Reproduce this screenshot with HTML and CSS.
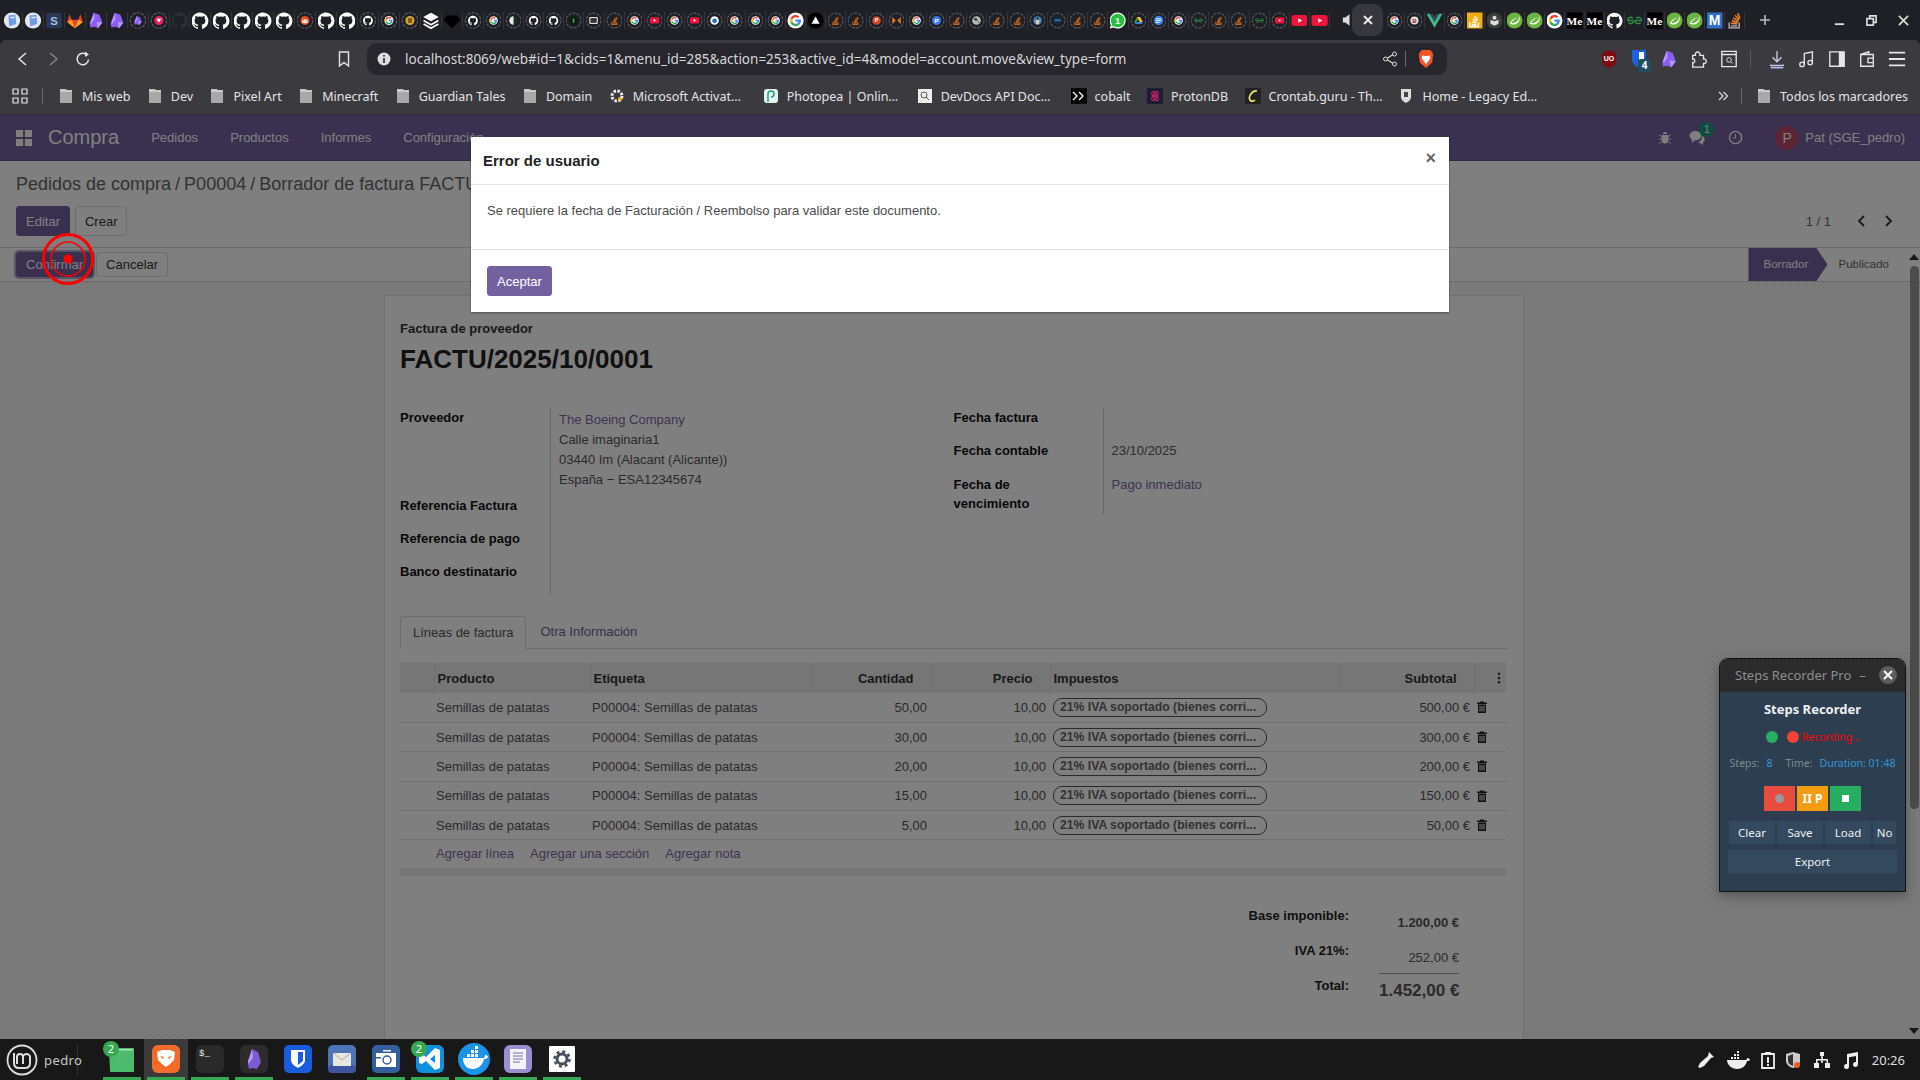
FILE: index.html
```html
<!DOCTYPE html>
<html lang="es">
<head>
    <meta charset="UTF-8">
    <title>Borrador de factura FACTU/2025/10/0001</title>
    <link rel="stylesheet" href="styles.css">
</head>
<body>
    <!-- iconos reutilizados -->
    <svg class="defs">
        <defs>
            <g id="ring"><circle cx="12" cy="12" r="11" fill="none" stroke="#5c5c62" stroke-width="1.6" stroke-dasharray="4.6 1.6"/></g>
            <g id="gh"><path fill="#fff" d="M12 .5C5.37.5 0 5.87 0 12.5c0 5.3 3.44 9.8 8.2 11.39.6.11.82-.26.82-.58v-2.03c-3.34.73-4.04-1.61-4.04-1.61-.55-1.39-1.34-1.76-1.34-1.76-1.09-.75.08-.73.08-.73 1.2.08 1.84 1.24 1.84 1.24 1.07 1.84 2.81 1.31 3.5 1 .11-.78.42-1.31.76-1.61-2.67-.3-5.47-1.33-5.47-5.93 0-1.31.47-2.38 1.24-3.22-.12-.3-.54-1.52.12-3.18 0 0 1.01-.32 3.3 1.23a11.5 11.5 0 0 1 6 0c2.29-1.55 3.3-1.23 3.3-1.23.66 1.66.24 2.88.12 3.18.77.84 1.24 1.91 1.24 3.22 0 4.61-2.81 5.63-5.48 5.92.43.37.81 1.1.81 2.22v3.29c0 .32.22.7.82.58C20.56 22.3 24 17.8 24 12.5 24 5.87 18.63.5 12 .5z"/></g>
            <g id="ghd"><path fill="#2a2f30" d="M12 .5C5.37.5 0 5.87 0 12.5c0 5.3 3.44 9.8 8.2 11.39v-3.2c-3.3.7-4-1.6-4-1.6-.6-1.4-1.3-1.8-1.3-1.8 1.2-.4 2.5 1.9 5.3 1.5.1-.8.4-1.3.8-1.6-2.7-.3-5.5-1.3-5.5-5.9 0-1.3.5-2.4 1.2-3.2-.1-.3-.5-1.5.1-3.2 0 0 1-.3 3.3 1.2a11.5 11.5 0 0 1 6 0c2.3-1.5 3.3-1.2 3.3-1.2.7 1.7.2 2.9.1 3.2.8.8 1.2 1.9 1.2 3.2 0 4.6-2.8 5.6-5.5 5.9.4.4.8 1.1.8 2.2v4.1C20.5 22.3 24 17.8 24 12.5 24 5.9 18.6.5 12 .5z"/></g>
            <g id="gl">
                <path fill="#4285F4" d="M22.56 12.25c0-.78-.07-1.53-.2-2.25H12v4.26h5.92c-.26 1.37-1.04 2.53-2.21 3.31v2.77h3.57c2.08-1.92 3.28-4.74 3.28-8.09z"/>
                <path fill="#34A853" d="M12 23c2.97 0 5.46-.98 7.28-2.66l-3.57-2.77c-.98.66-2.23 1.06-3.71 1.06-2.86 0-5.29-1.93-6.16-4.53H2.18v2.84C3.99 20.53 7.7 23 12 23z"/>
                <path fill="#FBBC05" d="M5.84 14.09c-.22-.66-.35-1.36-.35-2.09s.13-1.43.35-2.09V7.07H2.18C1.43 8.55 1 10.22 1 12s.43 3.45 1.18 4.93l3.66-2.84z"/>
                <path fill="#EA4335" d="M12 5.38c1.62 0 3.06.56 4.21 1.64l3.15-3.15C17.45 2.09 14.97 1 12 1 7.7 1 3.99 3.47 2.18 7.07l3.66 2.84c.87-2.6 3.3-4.53 6.16-4.53z"/>
            </g>
            <g id="gbig"><circle cx="12" cy="12" r="12" fill="#fff"/><use href="#gl" transform="translate(3 3) scale(.75)"/></g>
            <g id="rgl"><circle cx="12" cy="12" r="11" fill="#fff"/><use href="#gl" transform="translate(2 2) scale(.84)"/></g>
            <g id="doc"><circle cx="12" cy="12" r="11.5" fill="#e4e8ee"/><path fill="#6d9be6" d="M7 5l10-1 1 13-10 3z"/><path fill="#e4e8ee" d="M9.500 7l6-.6.2 2-6 .6z"/></g>
            <g id="sqs"><rect x="1" y="1" width="22" height="22" rx="3" fill="#2a3a56"/><text x="12" y="18" class="fav-t" fill="#a9c0e8" font-size="16">S</text></g>
            <g id="gitlab"><path fill="#e24329" d="M12 23L1 14l3-11 3.500 8h9L20 3l3 11z"/><path fill="#fca326" d="M12 23L1 14l6.500-3zM12 23l11-9-6.500-3z"/></g>
            <g id="obs"><path fill="#8b5cf6" d="M9 1l8 3 4 11-6 8-5-2-6 1-1-6z"/><path fill="#b79bf7" d="M9 1l1 9-5 7-1-2zM15 23l-2-9 8 1z"/></g>
            <g id="heart"><circle cx="12" cy="12" r="11" fill="#e8265e"/><path fill="#fff" d="M6 8h12l-6 9z"/></g>
            <g id="reddit"><circle cx="12" cy="12" r="11" fill="#e9491d"/><ellipse cx="12" cy="14" rx="7" ry="5" fill="#fff"/><circle cx="9" cy="13" r="1.500" fill="#e9491d"/><circle cx="15" cy="13" r="1.500" fill="#e9491d"/></g>
            <g id="yel"><circle cx="12" cy="12" r="11" fill="#d9a62e"/><rect x="7" y="6" width="10" height="12" fill="#7c5c1c"/></g>
            <g id="layers"><path fill="#fff" d="M12 1l11 6-11 6L1 7z"/><path fill="none" stroke="#fff" stroke-width="2.400" d="M1.500 12l10.500 6 10.500-6M1.500 17l10.500 6 10.500-6"/></g>
            <g id="diamond"><path fill="#000" d="M5 5h14l5 6-12 12L0 11z"/></g>
            <g id="half"><circle cx="12" cy="12" r="11" fill="#1d2a2a"/><path fill="#e8e8e8" d="M12 1a11 11 0 0 0 0 22z"/></g>
            <g id="green"><circle cx="12" cy="12" r="11" fill="#0d1a10"/><rect x="10" y="7" width="4" height="11" fill="#4caf50"/></g>
            <g id="rect"><rect x="1" y="3" width="22" height="18" rx="3" fill="#ddd"/><rect x="4" y="6" width="16" height="12" fill="#333"/></g>
            <g id="so"><path fill="none" stroke="#c8641c" stroke-width="3" d="M5 15v7h13v-7M8 18h7M8 14l7 1.200M9.500 10l6 3M12 6l5 5M16 3l3 6"/></g>
            <g id="yt"><rect x="0" y="4" width="24" height="16" rx="4" fill="#f0133a"/><path fill="#fff" d="M10 8.500l6 3.500-6 3.500z"/></g>
            <g id="bluew"><circle cx="12" cy="12" r="11" fill="#fff"/><circle cx="12" cy="13" r="6" fill="#1f7ab8"/></g>
            <g id="tri"><circle cx="12" cy="12" r="12" fill="#000"/><path fill="#fff" d="M12 6l6 11H6z"/></g>
            <g id="ppt"><circle cx="12" cy="12" r="11" fill="#d24726"/><text x="12" y="17" class="fav-t" fill="#fff" font-size="14">P</text></g>
            <g id="xor"><path fill="#e07b1a" d="M1 3l9 9-9 9zM23 3l-9 9 9 9z"/></g>
            <g id="pblue"><circle cx="12" cy="12" r="11.500" fill="#3b78f0"/><text x="12" y="18" class="fav-t" fill="#fff" font-size="16">P</text></g>
            <g id="earth"><circle cx="12" cy="12" r="11" fill="#bbb"/><path fill="#444" d="M5 5l8 1 2 5-4 3-5-3zM15 15l4-1-2 6z"/></g>
            <g id="photo"><circle cx="12" cy="12" r="11" fill="#3b87c4"/><ellipse cx="12" cy="15" rx="5" ry="7" fill="#d6cbb0"/><circle cx="12" cy="7" r="3" fill="#333"/></g>
            <g id="darkb"><circle cx="12" cy="12" r="11" fill="#16283f"/><rect x="4" y="9" width="16" height="5" fill="#2d76a8"/></g>
            <g id="wa"><path fill="#fff" d="M12 0a12 12 0 0 0-10 18.500L.5 24l5.700-1.500A12 12 0 1 0 12 0z"/><path fill="#25c03f" d="M12 2a10 10 0 0 0-8.300 15.600l-.9 3.500 3.600-1A10 10 0 1 0 12 2z"/><text x="12" y="17" class="fav-t" fill="#fff" font-size="14">1</text></g>
            <g id="drive"><path fill="#2a9d4e" d="M8 3L1 16l3 5 7-12z"/><path fill="#f7c12d" d="M8 3h8l7 13h-8z"/><path fill="#3f7fe8" d="M4 21h16l3-5H8z"/></g>
            <g id="docs"><circle cx="12" cy="12" r="12" fill="#3c83f0"/><path stroke="#fff" stroke-width="2.400" d="M5 8h14M5 12.500h14M5 17h9"/></g>
            <g id="gfg"><path fill="none" stroke="#2f8d46" stroke-width="2.200" d="M11 12H1.500a4.500 4.500 0 0 1 8-3M11 12a4.500 4.500 0 0 1-8 3M13 12h9.500a4.500 4.500 0 0 0-8-3M13 12a4.500 4.500 0 0 0 8 3"/></g>
            <g id="bb"><circle cx="12" cy="12" r="10.500" fill="#e6dcdc"/><text x="12" y="18" class="fav-t" fill="#8a1f2b" font-size="16">B</text></g>
            <g id="vue"><path fill="#41b883" d="M0 2h5l7 12 7-12h5L12 23z"/><path fill="#35495e" d="M5 2h4l3 5 3-5h4l-7 12z"/></g>
            <g id="soy"><rect width="24" height="24" fill="#f2ac14"/><path fill="none" stroke="#fff" stroke-width="2" d="M5 15v6h13v-6M8 18h7M8 14l7 1.200M9.500 10l6 3M12 6l5 5"/></g>
            <g id="cdark"><circle cx="12" cy="12" r="12" fill="#3d3d3d"/><path fill="#ddd" d="M6 11l6 2 6-2v6l-6 3-6-3z"/><circle cx="12" cy="8" r="3" fill="#ddd"/></g>
            <g id="spring"><circle cx="12" cy="12" r="12" fill="#6db33f"/><path fill="#fff" d="M20 4c1 8-3 14-11 14-2 0-4-1-4-1 2-6 8-9 12-9-4 1-8 4-10 8 7 0 12-4 13-12z"/></g>
            <g id="me"><rect width="24" height="24" fill="#000"/><text x="0" y="18" class="fav-m" fill="#fff" font-size="17">Me</text></g>
            <g id="mblue"><rect width="24" height="24" fill="#2f6fc9"/><text x="12" y="19" class="fav-t" fill="#fff" font-size="21">M</text></g>
            <g id="sobig"><path fill="none" stroke="#bcbbbb" stroke-width="2" d="M4 15v8h15v-8M7 20h9"/><path fill="none" stroke="#f48024" stroke-width="2.400" d="M7 16l9 1M8 12l9 3M10 8l8 5M13 4l6 7M17 1l3 8"/></g>
            <g id="trash"><path fill="#222" d="M8 1h8v2h6v3H2V3h6zM4 7h16v17H4zm3 3v11h2V10zm4 0v11h2V10zm4 0v11h2V10z"/></g>
            <g id="folder"><path fill="#a8a8a8" d="M2 1h5l2 1h5v13H2z"/><path fill="#c9c9c9" d="M2 1h5l2 1h5v2H2z"/></g>
        </defs>
    </svg>

    <div class="tabstrip">
        <div class="tabgroup tg-a">
            <svg class="fav" viewBox="0 0 24 24"><use href="#doc"/></svg>
            <svg class="fav" viewBox="0 0 24 24"><use href="#doc"/></svg>
            <svg class="fav" viewBox="0 0 24 24"><use href="#sqs"/></svg>
            <svg class="fav" viewBox="0 0 24 24"><use href="#gitlab"/></svg>
            <svg class="fav" viewBox="0 0 24 24"><use href="#obs"/></svg>
            <svg class="fav" viewBox="0 0 24 24"><use href="#obs"/></svg>
            <svg class="fav" viewBox="0 0 24 24"><use href="#ring"/><use class="in" href="#obs"/></svg>
            <svg class="fav" viewBox="0 0 24 24"><use href="#ring"/><use class="in" href="#heart"/></svg>
            <svg class="fav" viewBox="0 0 24 24"><use href="#ghd"/></svg>
            <svg class="fav" viewBox="0 0 24 24"><use href="#gh"/></svg>
            <svg class="fav" viewBox="0 0 24 24"><use href="#gh"/></svg>
            <svg class="fav" viewBox="0 0 24 24"><use href="#gh"/></svg>
            <svg class="fav" viewBox="0 0 24 24"><use href="#gh"/></svg>
            <svg class="fav" viewBox="0 0 24 24"><use href="#gh"/></svg>
            <svg class="fav" viewBox="0 0 24 24"><use href="#ring"/><use class="in" href="#reddit"/></svg>
            <svg class="fav" viewBox="0 0 24 24"><use href="#gh"/></svg>
            <svg class="fav" viewBox="0 0 24 24"><use href="#gh"/></svg>
            <svg class="fav" viewBox="0 0 24 24"><use href="#ring"/><use class="in" href="#gh"/></svg>
            <svg class="fav" viewBox="0 0 24 24"><use href="#ring"/><use class="in" href="#rgl"/></svg>
            <svg class="fav" viewBox="0 0 24 24"><use href="#ring"/><use class="in" href="#yel"/></svg>
            <svg class="fav" viewBox="0 0 24 24"><use href="#layers"/></svg>
            <svg class="fav" viewBox="0 0 24 24"><use href="#diamond"/></svg>
            <svg class="fav" viewBox="0 0 24 24"><use href="#ring"/><use class="in" href="#gh"/></svg>
        </div>
        <div class="tabgroup tg-b">
            <svg class="fav" viewBox="0 0 24 24"><use href="#ring"/><use class="in" href="#rgl"/></svg>
            <svg class="fav" viewBox="0 0 24 24"><use href="#ring"/><use class="in" href="#half"/></svg>
            <svg class="fav" viewBox="0 0 24 24"><use href="#ring"/><use class="in" href="#gh"/></svg>
            <svg class="fav" viewBox="0 0 24 24"><use href="#ring"/><use class="in" href="#gh"/></svg>
            <svg class="fav" viewBox="0 0 24 24"><use href="#ring"/><use class="in" href="#green"/></svg>
            <svg class="fav" viewBox="0 0 24 24"><use href="#ring"/><use class="in" href="#rect"/></svg>
            <svg class="fav" viewBox="0 0 24 24"><use href="#ring"/><use class="in" href="#so"/></svg>
            <svg class="fav" viewBox="0 0 24 24"><use href="#ring"/><use class="in" href="#rgl"/></svg>
            <svg class="fav" viewBox="0 0 24 24"><use href="#ring"/><use class="in" href="#yt"/></svg>
            <svg class="fav" viewBox="0 0 24 24"><use href="#ring"/><use class="in" href="#rgl"/></svg>
            <svg class="fav" viewBox="0 0 24 24"><use href="#ring"/><use class="in" href="#yt"/></svg>
            <svg class="fav" viewBox="0 0 24 24"><use href="#ring"/><use class="in" href="#bluew"/></svg>
            <svg class="fav" viewBox="0 0 24 24"><use href="#ring"/><use class="in" href="#rgl"/></svg>
            <svg class="fav" viewBox="0 0 24 24"><use href="#ring"/><use class="in" href="#rgl"/></svg>
            <svg class="fav" viewBox="0 0 24 24"><use href="#ring"/><use class="in" href="#rgl"/></svg>
            <svg class="fav" viewBox="0 0 24 24"><use href="#gbig"/></svg>
            <svg class="fav" viewBox="0 0 24 24"><use href="#tri"/></svg>
            <svg class="fav" viewBox="0 0 24 24"><use href="#ring"/><use class="in" href="#so"/></svg>
            <svg class="fav" viewBox="0 0 24 24"><use href="#ring"/><use class="in" href="#so"/></svg>
            <svg class="fav" viewBox="0 0 24 24"><use href="#ring"/><use class="in" href="#ppt"/></svg>
            <svg class="fav" viewBox="0 0 24 24"><use href="#ring"/><use class="in" href="#xor"/></svg>
            <svg class="fav" viewBox="0 0 24 24"><use href="#ring"/><use class="in" href="#rgl"/></svg>
            <svg class="fav" viewBox="0 0 24 24"><use href="#ring"/><use class="in" href="#pblue"/></svg>
            <svg class="fav" viewBox="0 0 24 24"><use href="#ring"/><use class="in" href="#so"/></svg>
            <svg class="fav" viewBox="0 0 24 24"><use href="#ring"/><use class="in" href="#earth"/></svg>
            <svg class="fav" viewBox="0 0 24 24"><use href="#ring"/><use class="in" href="#so"/></svg>
            <svg class="fav" viewBox="0 0 24 24"><use href="#ring"/><use class="in" href="#so"/></svg>
            <svg class="fav" viewBox="0 0 24 24"><use href="#ring"/><use class="in" href="#photo"/></svg>
            <svg class="fav" viewBox="0 0 24 24"><use href="#ring"/><use class="in" href="#darkb"/></svg>
            <svg class="fav" viewBox="0 0 24 24"><use href="#ring"/><use class="in" href="#so"/></svg>
            <svg class="fav" viewBox="0 0 24 24"><use href="#ring"/><use class="in" href="#so"/></svg>
            <svg class="fav" viewBox="0 0 24 24"><use href="#wa"/></svg>
            <svg class="fav" viewBox="0 0 24 24"><use href="#ring"/><use class="in" href="#drive"/></svg>
            <svg class="fav" viewBox="0 0 24 24"><use href="#ring"/><use class="in" href="#docs"/></svg>
            <svg class="fav" viewBox="0 0 24 24"><use href="#ring"/><use class="in" href="#rgl"/></svg>
            <svg class="fav" viewBox="0 0 24 24"><use href="#ring"/><use class="in" href="#gfg"/></svg>
            <svg class="fav" viewBox="0 0 24 24"><use href="#ring"/><use class="in" href="#so"/></svg>
            <svg class="fav" viewBox="0 0 24 24"><use href="#ring"/><use class="in" href="#so"/></svg>
            <svg class="fav" viewBox="0 0 24 24"><use href="#ring"/><use class="in" href="#gfg"/></svg>
            <svg class="fav" viewBox="0 0 24 24"><use href="#ring"/><use class="in" href="#yt"/></svg>
            <svg class="fav" viewBox="0 0 24 24"><use href="#yt"/></svg>
            <svg class="fav" viewBox="0 0 24 24"><use href="#yt"/></svg>
        </div>
        <div class="active-tab">
            <svg class="tab-vol" viewBox="0 0 12 16"><path fill="#ddd" d="M1 5h3l5-4v14l-5-4H1z"/></svg>
            <div class="tab-current"><svg viewBox="0 0 10 10" width="10" height="10"><path stroke="#eee" stroke-width="1.800" d="M1 1l8 8M9 1l-8 8"/></svg></div>
        </div>
        <div class="tabgroup tg-c">
            <svg class="fav" viewBox="0 0 24 24"><use href="#ring"/><use class="in" href="#rgl"/></svg>
            <svg class="fav" viewBox="0 0 24 24"><use href="#ring"/><use class="in" href="#bb"/></svg>
            <svg class="fav" viewBox="0 0 24 24"><use href="#vue"/></svg>
            <svg class="fav" viewBox="0 0 24 24"><use href="#ring"/><use class="in" href="#rgl"/></svg>
            <svg class="fav" viewBox="0 0 24 24"><use href="#soy"/></svg>
            <svg class="fav" viewBox="0 0 24 24"><use href="#cdark"/></svg>
            <svg class="fav" viewBox="0 0 24 24"><use href="#spring"/></svg>
            <svg class="fav" viewBox="0 0 24 24"><use href="#spring"/></svg>
            <svg class="fav" viewBox="0 0 24 24"><use href="#gbig"/></svg>
            <svg class="fav" viewBox="0 0 24 24"><use href="#me"/></svg>
            <svg class="fav" viewBox="0 0 24 24"><use href="#me"/></svg>
            <svg class="fav" viewBox="0 0 24 24"><use href="#gh"/></svg>
            <svg class="fav" viewBox="0 0 24 24"><use href="#gfg"/></svg>
            <svg class="fav" viewBox="0 0 24 24"><use href="#me"/></svg>
            <svg class="fav" viewBox="0 0 24 24"><use href="#spring"/></svg>
            <svg class="fav" viewBox="0 0 24 24"><use href="#spring"/></svg>
            <svg class="fav" viewBox="0 0 24 24"><use href="#mblue"/></svg>
            <svg class="fav" viewBox="0 0 24 24"><use href="#sobig"/></svg>
        </div>
        <svg class="new-tab" viewBox="0 0 12 12"><path stroke="#bbb" stroke-width="1.600" d="M6 1v10M1 6h10"/></svg>
        <div class="win-ctrl">
            <svg viewBox="0 0 12 12"><path stroke="#ddd" stroke-width="2" d="M1 10h10"/></svg>
            <svg viewBox="0 0 12 12"><path fill="none" stroke="#ddd" stroke-width="1.800" d="M1 4h7v7H1zM4 4V1h7v7H8"/></svg>
            <svg viewBox="0 0 12 12"><path stroke="#ddd" stroke-width="1.800" d="M1 1l10 10M11 1L1 11"/></svg>
        </div>
    </div>

    <div class="toolbar">
        <div class="nav-btns">
            <svg viewBox="0 0 16 16"><path fill="none" stroke="#e6e6e6" stroke-width="1.500" d="M11 2L4 8l7 6"/></svg>
            <svg viewBox="0 0 16 16"><path fill="none" stroke="#85858a" stroke-width="1.500" d="M5 2l7 6-7 6"/></svg>
            <svg viewBox="0 0 16 16"><path fill="none" stroke="#e6e6e6" stroke-width="1.500" d="M13.500 8.500A5.700 5.700 0 1 1 11 3.300"/><path fill="#e6e6e6" d="M10 .5l4 3-4 2.500z"/></svg>
        </div>
        <svg class="bookmark-ic" viewBox="0 0 12 16"><path fill="none" stroke="#e6e6e6" stroke-width="1.400" d="M1.500 1h9v14L6 11.500 1.500 15z"/></svg>
        <div class="omnibox">
            <svg class="info-ic" viewBox="0 0 14 14"><circle cx="7" cy="7" r="6.500" fill="#ddd"/><path stroke="#26262c" stroke-width="1.600" d="M7 6v5M7 3v1.600"/></svg>
            <span class="url">localhost:8069/web#id=1&amp;cids=1&amp;menu_id=285&amp;action=253&amp;active_id=4&amp;model=account.move&amp;view_type=form</span>
            <svg class="share-ic" viewBox="0 0 16 16"><path fill="none" stroke="#ddd" stroke-width="1.100" d="M4 8l8-5M4 8l8 5"/><circle cx="3.500" cy="8" r="2" fill="#26262c" stroke="#ddd"/><circle cx="12.500" cy="3" r="2" fill="#26262c" stroke="#ddd"/><circle cx="12.500" cy="13" r="2" fill="#26262c" stroke="#ddd"/></svg>
            <span class="omni-sep"></span>
            <svg class="brave-ic" viewBox="0 0 18 20"><path fill="#f1562b" d="M4 0h10l3 4-1 10-7 6-7-6L1 4z"/><path fill="#fff" d="M5 6l4 1 4-1 1 3-3 4-2 3-2-3-3-4z"/></svg>
        </div>
        <div class="ext-icons">
            <svg viewBox="0 0 18 20"><path fill="#7d0d12" d="M9 1l7 3v8c0 4-4 6-7 7-3-1-7-3-7-7V4z"/><text x="9" y="12" class="fav-t" font-size="7" fill="#fff">UO</text></svg>
            <span class="ext-bw">
                <svg viewBox="0 0 18 20"><path fill="#1d63d8" d="M2 1h14v10c0 4-4 6-7 8-3-2-7-4-7-8z"/><path fill="#fff" d="M9 3h5v8c0 2-3 3-5 5z"/></svg>
                <b class="ext-badge">4</b>
            </span>
            <svg viewBox="0 0 24 24"><use href="#obs"/></svg>
            <svg viewBox="0 0 20 20"><path fill="none" stroke="#e6e6e6" stroke-width="1.500" d="M3 6h3c-1-5 6-5 5 0h4v4c4-1 4 6 0 5v4H3v-5c3 1 3-5 0-4z"/></svg>
            <svg viewBox="0 0 20 20"><path fill="none" stroke="#e6e6e6" stroke-width="1.500" d="M2 1.500h16v17H2zM2 5h16"/><circle cx="10" cy="11" r="2.600" fill="none" stroke="#e6e6e6"/><path stroke="#e6e6e6" d="M12 13l2 2"/></svg>
            <span class="ext-sep"></span>
            <svg viewBox="0 0 20 20"><path fill="none" stroke="#c9c9e8" stroke-width="1.500" d="M10 1v11M5 8l5 5 5-5M3 16v1h14v-1"/><path stroke="#b9b6f0" stroke-width="2" d="M3 19.500h14"/></svg>
            <svg viewBox="0 0 20 20"><path fill="none" stroke="#e6e6e6" stroke-width="1.500" d="M7 16V4l9-2v12"/><circle cx="4.500" cy="16" r="2.500" fill="none" stroke="#e6e6e6" stroke-width="1.500"/><circle cx="13.500" cy="14" r="2.500" fill="none" stroke="#e6e6e6" stroke-width="1.500"/></svg>
            <svg viewBox="0 0 20 20"><path fill="none" stroke="#e6e6e6" stroke-width="1.500" d="M2 2h16v16H2z"/><path fill="#e6e6e6" d="M12 2h6v16h-6z"/></svg>
            <svg viewBox="0 0 20 20"><path fill="none" stroke="#e6e6e6" stroke-width="1.500" d="M3 5h14v13H3zM3 5l9-3v3M11 9h6v5h-6z"/></svg>
            <svg viewBox="0 0 20 20"><path stroke="#e6e6e6" stroke-width="2" d="M1 3h18M1 10h18M1 17h18"/></svg>
        </div>
    </div>

    <div class="bookmarks">
        <svg class="apps-ic" viewBox="0 0 16 16"><path fill="none" stroke="#e6e6e6" stroke-width="1.200" d="M1 1h5v5H1zM10 1h5v5h-5zM1 10h5v5H1zM10 10h5v5h-5z"/></svg>
        <span class="bm-sep"></span>
        <div class="bm-list">
            <a class="bm"><svg viewBox="0 0 16 16"><use href="#folder"/></svg>Mis web</a>
            <a class="bm"><svg viewBox="0 0 16 16"><use href="#folder"/></svg>Dev</a>
            <a class="bm"><svg viewBox="0 0 16 16"><use href="#folder"/></svg>Pixel Art</a>
            <a class="bm"><svg viewBox="0 0 16 16"><use href="#folder"/></svg>Minecraft</a>
            <a class="bm"><svg viewBox="0 0 16 16"><use href="#folder"/></svg>Guardian Tales</a>
            <a class="bm"><svg viewBox="0 0 16 16"><use href="#folder"/></svg>Domain</a>
            <a class="bm long"><svg viewBox="0 0 16 16"><circle cx="8" cy="8" r="5" fill="none" stroke="#eee" stroke-width="3" stroke-dasharray="2.500 1.400"/><circle cx="11" cy="11" r="2" fill="#f0b429"/></svg>Microsoft Activat…</a>
            <a class="bm long"><svg viewBox="0 0 16 16"><rect x="1" y="1" width="14" height="14" rx="3" fill="#e6f2ee"/><path fill="none" stroke="#1c9c8a" stroke-width="1.500" d="M5 14V6a3 3 0 1 1 3 3"/></svg>Photopea | Onlin…</a>
            <a class="bm long"><svg viewBox="0 0 16 16"><rect x="1" y="1" width="14" height="14" fill="#eee"/><circle cx="7" cy="7" r="3" fill="none" stroke="#555"/><path stroke="#555" d="M9 9l3 3"/></svg>DevDocs API Doc…</a>
            <a class="bm"><svg viewBox="0 0 16 16"><rect width="16" height="16" fill="#000"/><path fill="none" stroke="#fff" stroke-width="1.300" d="M2 4l4 4-4 4M8 4l4 4-4 4"/></svg>cobalt</a>
            <a class="bm"><svg viewBox="0 0 16 16"><rect width="16" height="16" fill="#1c1c34"/><ellipse cx="8" cy="8" rx="5" ry="2.200" fill="none" stroke="#e0246a" transform="rotate(60 8 8)"/><ellipse cx="8" cy="8" rx="5" ry="2.200" fill="none" stroke="#e0246a" transform="rotate(-60 8 8)"/><circle cx="8" cy="8" r="1.300" fill="#e0246a"/></svg>ProtonDB</a>
            <a class="bm long"><svg viewBox="0 0 16 16"><rect width="16" height="16" fill="#222"/><path fill="none" stroke="#e9e65e" stroke-width="1.700" d="M12 3C7 2 3 9 5 12c1 2 4 1 5 0"/></svg>Crontab.guru - Th…</a>
            <a class="bm long"><svg viewBox="0 0 16 16"><path fill="#ddd" d="M3 1h10v8c0 3-3 5-5 6-2-1-5-3-5-6z"/><path fill="#444" d="M6 4h4v5H6z"/></svg>Home - Legacy Ed…</a>
        </div>
        <div class="bm-right">
            <svg class="bm-more" viewBox="0 0 12 12"><path fill="none" stroke="#ddd" stroke-width="1.200" d="M2 2l4 4-4 4M6.500 2l4 4-4 4"/></svg>
            <span class="bm-sep"></span>
            <a class="bm"><svg viewBox="0 0 16 16"><use href="#folder"/></svg>Todos los marcadores</a>
        </div>
    </div>

    <div class="odoo">
        <header class="o-nav">
            <svg class="o-apps" viewBox="0 0 18 18"><path fill="#fff" d="M0 0h8v8H0zM10 0h8v8h-8zM0 10h8v8H0zM10 10h8v8h-8z"/></svg>
            <span class="o-brand">Compra</span>
            <nav class="o-menu">
                <a>Pedidos</a>
                <a>Productos</a>
                <a>Informes</a>
                <a>Configuración</a>
            </nav>
            <div class="o-systray">
                <svg class="bug-ic" viewBox="0 0 14 16"><path fill="#fff" d="M4.500 4a2.500 2.500 0 0 1 5 0zM3 5h8v6a4 4 0 0 1-8 0z"/><path stroke="#fff" d="M3 7L0 5M11 7l3-2M3 10H0M11 10h3M3 13l-3 2M11 13l3 2"/></svg>
                <span class="chat-ic">
                    <svg viewBox="0 0 18 16"><path fill="#fff" d="M7 1a6 5 0 0 1 6 5 6 5 0 0 1-7 5l-3 3v-4A6 5 0 0 1 7 1z"/><path fill="#fff" d="M14 6a4 4 0 0 1 1 7v3l-3-2-3-1c3 0 5-4 5-7z"/></svg>
                    <b class="chat-badge">1</b>
                </span>
                <svg class="clock-ic" viewBox="0 0 16 16"><circle cx="8" cy="8" r="6.500" fill="none" stroke="#fff" stroke-width="1.500"/><path fill="none" stroke="#fff" d="M8 4v4.500H5"/></svg>
                <span class="avatar">P</span>
                <span class="o-user">Pat (SGE_pedro)</span>
            </div>
        </header>

        <section class="cp">
            <div class="crumbs">
                <span>Pedidos de compra</span><span class="crumb-sep">/</span><span>P00004</span><span class="crumb-sep">/</span><span>Borrador de factura FACTU/2025/10/0001</span>
            </div>
            <div class="cp-row">
                <button class="btn primary">Editar</button>
                <button class="btn">Crear</button>
                <div class="pager">
                    <span>1 / 1</span>
                    <svg viewBox="0 0 8 12"><path fill="none" stroke="#333" stroke-width="1.800" d="M6.500 1L1.500 6l5 5"/></svg>
                    <svg viewBox="0 0 8 12"><path fill="none" stroke="#333" stroke-width="1.800" d="M1.500 1l5 5-5 5"/></svg>
                </div>
            </div>
            <div class="cp-row cp-status">
                <button class="btn primary focus">Confirmar</button>
                <button class="btn">Cancelar</button>
                <div class="statusbar">
                    <span class="st st-on">Borrador</span>
                    <span class="st">Publicado</span>
                </div>
            </div>
        </section>

        <main class="content">
            <div class="sheet">
                <div class="sheet-kind">Factura de proveedor</div>
                <h1 class="sheet-title">FACTU/2025/10/0001</h1>

                <div class="groups">
                    <div class="fgroup">
                        <div class="f-label first">Proveedor</div>
                        <div class="f-value addr">
                            <a class="link">The Boeing Company</a>
                            <div>Calle imaginaria1</div>
                            <div>03440 Im (Alacant (Alicante))</div>
                            <div>España − ESA12345674</div>
                        </div>
                        <div class="f-label row33">Referencia Factura</div>
                        <div class="f-value"></div>
                        <div class="f-label row33">Referencia de pago</div>
                        <div class="f-value"></div>
                        <div class="f-label row33 last">Banco destinatario</div>
                        <div class="f-value"></div>
                    </div>
                    <div class="fgroup right">
                        <div class="f-label first h33">Fecha factura</div>
                        <div class="f-value"></div>
                        <div class="f-label first h33">Fecha contable</div>
                        <div class="f-value plain">23/10/2025</div>
                        <div class="f-label first tall">Fecha de vencimiento</div>
                        <div class="f-value plain"><a class="link">Pago inmediato</a></div>
                    </div>
                </div>

                <div class="nb-tabs">
                    <a class="nb-tab on">Líneas de factura</a>
                    <a class="nb-tab">Otra Información</a>
                </div>

                <table class="lines">
                    <colgroup>
                        <col class="c-h"><col class="c-p"><col class="c-e"><col class="c-n"><col class="c-n"><col class="c-t"><col class="c-s"><col class="c-x">
                    </colgroup>
                    <thead>
                        <tr>
                            <th></th><th>Producto</th><th>Etiqueta</th><th class="num">Cantidad</th><th class="num">Precio</th><th>Impuestos</th><th class="num">Subtotal</th>
                            <th class="kebab"><svg viewBox="0 0 4 14"><circle cx="2" cy="2" r="1.500"/><circle cx="2" cy="7" r="1.500"/><circle cx="2" cy="12" r="1.500"/></svg></th>
                        </tr>
                    </thead>
                    <tbody>
                        <tr>
                            <td></td><td>Semillas de patatas</td><td>P00004: Semillas de patatas</td><td class="num">50,00</td><td class="num">10,00</td>
                            <td><span class="tag">21% IVA soportado (bienes corri...</span></td><td class="num">500,00 €</td>
                            <td class="del"><svg viewBox="0 0 24 24"><use href="#trash"/></svg></td>
                        </tr>
                        <tr>
                            <td></td><td>Semillas de patatas</td><td>P00004: Semillas de patatas</td><td class="num">30,00</td><td class="num">10,00</td>
                            <td><span class="tag">21% IVA soportado (bienes corri...</span></td><td class="num">300,00 €</td>
                            <td class="del"><svg viewBox="0 0 24 24"><use href="#trash"/></svg></td>
                        </tr>
                        <tr>
                            <td></td><td>Semillas de patatas</td><td>P00004: Semillas de patatas</td><td class="num">20,00</td><td class="num">10,00</td>
                            <td><span class="tag">21% IVA soportado (bienes corri...</span></td><td class="num">200,00 €</td>
                            <td class="del"><svg viewBox="0 0 24 24"><use href="#trash"/></svg></td>
                        </tr>
                        <tr>
                            <td></td><td>Semillas de patatas</td><td>P00004: Semillas de patatas</td><td class="num">15,00</td><td class="num">10,00</td>
                            <td><span class="tag">21% IVA soportado (bienes corri...</span></td><td class="num">150,00 €</td>
                            <td class="del"><svg viewBox="0 0 24 24"><use href="#trash"/></svg></td>
                        </tr>
                        <tr>
                            <td></td><td>Semillas de patatas</td><td>P00004: Semillas de patatas</td><td class="num">5,00</td><td class="num">10,00</td>
                            <td><span class="tag">21% IVA soportado (bienes corri...</span></td><td class="num">50,00 €</td>
                            <td class="del"><svg viewBox="0 0 24 24"><use href="#trash"/></svg></td>
                        </tr>
                    </tbody>
                </table>
                <div class="add-row">
                    <a class="link">Agregar línea</a>
                    <a class="link">Agregar una sección</a>
                    <a class="link">Agregar nota</a>
                </div>
                <div class="lines-foot"></div>

                <div class="totals">
                    <span class="t-label">Base imponible:</span><span class="t-val strong">1.200,00 €</span>
                    <span class="t-label">IVA 21%:</span><span class="t-val">252,00 €</span>
                    <span class="t-label">Total:</span><span class="t-val grand">1.452,00 €</span>
                </div>
            </div>
        </main>

        <div class="scrollbar">
            <span class="sb-up"></span>
            <span class="sb-thumb"></span>
            <span class="sb-down"></span>
        </div>

        <div class="backdrop"></div>

        <div class="dialog">
            <div class="dlg-head">
                <h4>Error de usuario</h4>
                <span class="dlg-close">×</span>
            </div>
            <div class="dlg-body">Se requiere la fecha de Facturación / Reembolso para validar este documento.</div>
            <div class="dlg-foot"><button class="btn primary">Aceptar</button></div>
        </div>

        <svg class="click-mark" viewBox="0 0 60 60">
            <circle cx="30" cy="30" r="24.500" fill="none" stroke="#f00" stroke-width="3"/>
            <circle cx="30" cy="30" r="17" fill="none" stroke="#f00" stroke-width="1.500"/>
            <circle cx="30" cy="30" r="4.500" fill="#f00"/>
        </svg>

        <aside class="recorder">
            <div class="rec-head">
                <span class="rec-title">Steps Recorder Pro</span>
                <span class="rec-min">–</span>
                <span class="rec-close"><svg viewBox="0 0 10 10" width="10" height="10"><path stroke="#fff" stroke-width="2" d="M1 1l8 8M9 1l-8 8"/></svg></span>
            </div>
            <div class="rec-body">
                <div class="rec-name">Steps Recorder</div>
                <div class="rec-state">
                    <span class="dot green"></span>
                    <span class="dot red"></span>
                    <span class="rec-label">Recording...</span>
                </div>
                <div class="rec-stats">
                    <span>Steps:</span><b class="s-num">8</b>
                    <span>Time:</span><b>Duration: 01:48</b>
                </div>
                <div class="rec-main">
                    <button class="r-btn r-red"><i class="rec-dot"></i></button>
                    <button class="r-btn r-orange">II&nbsp;P</button>
                    <button class="r-btn r-green"><i class="rec-sq"></i></button>
                </div>
                <div class="rec-small">
                    <button class="s-btn">Clear</button>
                    <button class="s-btn">Save</button>
                    <button class="s-btn">Load</button>
                    <button class="s-btn cut">No</button>
                </div>
                <button class="s-btn wide">Export</button>
            </div>
        </aside>
    </div>

    <footer class="taskbar">
        <div class="tb-start">
            <svg viewBox="0 0 32 32"><circle cx="16" cy="16" r="14.500" fill="none" stroke="#ddd" stroke-width="1.800"/><path fill="none" stroke="#ddd" stroke-width="2" d="M8 9v10c0 3 2 5 5 5h6c3 0 5-2 5-5v-6c0-2-2-3-3.500-3S17 11 17 13v7M17 13c0-2-1.500-3-3-3s-3 1-3 3v7"/></svg>
            <span>pedro</span>
        </div>
        <div class="launchers">
            <div class="app run">
                <svg viewBox="0 0 28 28"><path fill="#4cbb6c" d="M1 3h24a1 1 0 0 1 1 1v22a1 1 0 0 1-1 1H3a1 1 0 0 1-1-1z"/><path fill="#a5e0b8" d="M10 4h15v1.500H11z"/></svg>
                <b class="app-badge">2</b>
            </div>
            <div class="app run cur">
                <svg viewBox="0 0 28 28"><rect width="28" height="28" rx="6" fill="#f26b2a"/><path fill="#fff" d="M5 7l5-2h8l5 2-1 8-4 4-4 3-4-3-4-4z"/><path fill="#f26b2a" d="M8 11l4 1-1 2zM20 11l-4 1 1 2z"/></svg>
            </div>
            <div class="app run">
                <svg viewBox="0 0 28 28"><rect width="28" height="28" rx="6" fill="#2a2a2a"/><text x="3" y="11" class="term-t" font-size="9" fill="#eee">$_</text></svg>
            </div>
            <div class="app run">
                <svg viewBox="0 0 28 28"><rect width="28" height="28" rx="6" fill="#2c2c2c"/><path fill="#7e5bd6" d="M12 4l6 3 3 10-4 7-4-1-4 1-1-5z"/><path fill="#b59cf0" d="M12 4l1 9-5 6-0-3z"/></svg>
            </div>
            <div class="app">
                <svg viewBox="0 0 28 28"><rect width="28" height="28" rx="5" fill="#175ddc"/><path fill="#fff" d="M7 5h14v10c0 4-4 6-7 8-3-2-7-4-7-8z"/><path fill="#175ddc" d="M14 7h5v8c0 2-3 3-5 5z"/></svg>
            </div>
            <div class="app">
                <svg viewBox="0 0 28 28"><rect width="28" height="28" rx="5" fill="#4e74b8"/><rect y="20" width="28" height="8" rx="4" fill="#3f55a0"/><rect x="5" y="8" width="18" height="13" fill="#e8e8de"/><path fill="none" stroke="#aaa" d="M5 8l9 7 9-7"/></svg>
            </div>
            <div class="app run">
                <svg viewBox="0 0 28 28"><rect width="28" height="28" rx="5" fill="#345e9e"/><rect x="11" y="5" width="8" height="1.500" fill="#fff"/><rect x="4" y="8" width="20" height="14" fill="#fff"/><circle cx="15" cy="15" r="4" fill="#fff" stroke="#345e9e" stroke-width="1.500"/><rect x="4" y="12" width="5" height="1.500" fill="#345e9e"/></svg>
            </div>
            <div class="app run">
                <svg viewBox="0 0 28 28"><rect width="28" height="28" rx="6" fill="#0f8fdd"/><path fill="#fff" d="M19 3l5 2v18l-5 2-9-9-4 3-3-1v-8l3-1 4 3zm0 7l-5 4 5 4z"/></svg>
                <b class="app-badge">2</b>
            </div>
            <div class="app run">
                <svg class="ic-docker" viewBox="0 0 32 32"><circle cx="16" cy="16" r="16" fill="#1a93e8"/><path fill="#fff" d="M5 15h20c2 0 2-2 2-3 2 0 3 1 3 2-1 2-3 2-4 2-1 6-6 10-11 10-5 0-10-3-10-11z"/><path fill="#fff" d="M9 11h3v3H9zM13 11h3v3h-3zM17 11h3v3h-3zM13 7h3v3h-3zM17 7h3v3h-3zM17 3h3v3h-3z"/></svg>
            </div>
            <div class="app run">
                <svg viewBox="0 0 28 28"><rect width="28" height="28" rx="6" fill="#9a8fd0"/><rect x="6" y="4" width="16" height="20" fill="#f4f3fb"/><path stroke="#706aa6" d="M9 8h10M9 11h10M9 14h10M9 17h7"/></svg>
            </div>
            <div class="app run">
                <svg class="ic-gear" viewBox="0 0 26 26"><rect width="26" height="26" rx="1" fill="#fff"/><circle cx="13" cy="13" r="5" fill="none" stroke="#44505e" stroke-width="3"/><circle cx="13" cy="13" r="7.500" fill="none" stroke="#44505e" stroke-width="2.500" stroke-dasharray="3 2.900"/></svg>
            </div>
        </div>
        <div class="tray">
            <svg viewBox="0 0 18 18"><path fill="#eee" d="M12 1l5 5-3 1-7 8-4 2-2-1 2-4 8-7z"/></svg>
            <svg class="t-dock" viewBox="0 0 24 18"><path fill="#eee" d="M1 9h18c2 0 2-1 2-2 2 0 3 1 3 2-1 1-2 1-3 1-1 5-5 8-10 8S1 14 1 9z"/><path fill="#eee" d="M5 6h2v2H5zM8 6h2v2H8zM11 6h2v2h-2zM8 3h2v2H8zM11 3h2v2h-2zM11 0h2v2h-2z"/></svg>
            <svg class="t-clip" viewBox="0 0 18 18"><path fill="none" stroke="#eee" stroke-width="1.800" d="M3 3h12v14H3z"/><path stroke="#eee" stroke-width="2" d="M6 2h6M9 6v6M9 13v2"/></svg>
            <svg viewBox="0 0 18 18"><path fill="#ccc" d="M9 1l7 2v7c0 3-3 6-7 7-4-1-7-4-7-7V3z"/><path fill="#333" d="M9 3v12c-3-1-5-3-5-5V5z"/><circle cx="13" cy="14" r="3" fill="#e8622a"/></svg>
            <svg viewBox="0 0 18 18"><path fill="#eee" d="M7 1h4v4H7zM1 12h5v5H1zM12 12h5v5h-5zM8.200 5h1.600v3H15v4h-1.500V9.500h-3.700V12H8.200V9.500H4.500V12H3V8h5.200z"/></svg>
            <svg viewBox="0 0 18 18"><path fill="#eee" d="M5 3l11-2v12.500a2.500 2.500 0 1 1-2-2.400V5L7 6.200v9.300a2.500 2.500 0 1 1-2-2.400z"/></svg>
            <span class="clock">20:26</span>
        </div>
    </footer>
</body>
</html>
```

FILE: styles.css
```css
* {
    box-sizing: border-box;
}
html, body {
    margin: 0;
    height: 100%;
}
body {
    width: 1920px;
    height: 1080px;
    display: flex;
    flex-direction: column;
    overflow: hidden;
    background: #1f1f26;
    font-family: "Noto Sans", sans-serif;
}
.defs {
    display: none;
}
button {
    font: inherit;
    border: none;
}

/* pestañas */
.tabstrip {
    height: 40px;
    display: flex;
    align-items: center;
    padding-left: 2px;
    background: #1f1f26;
    flex: none;
}
.tabgroup {
    display: flex;
    align-items: center;
}
.fav {
    height: 17px;
    padding: 0 1.5px;
    border-right: 1px solid #34343a;
    flex: none;
}
.tg-a .fav { width: 20.95px; }
.tg-b .fav { width: 20.17px; }
.tg-c .fav { width: 20px; }
.tg-c {
    margin-left: 2px;
}
.in {
    transform: translate(5px, 5px) scale(.58);
}
.fav-t {
    font-family: "Liberation Sans", sans-serif;
    font-weight: bold;
    text-anchor: middle;
}
.fav-m {
    font-family: "Liberation Serif", serif;
    font-weight: bold;
}
.term-t {
    font-family: "Liberation Mono", monospace;
}
.active-tab {
    display: flex;
    align-items: center;
}
.tab-vol {
    width: 22px;
    height: 14px;
    padding-left: 12px;
}
.tab-current {
    width: 31px;
    height: 32px;
    background: #37373d;
    border-radius: 9px;
    display: flex;
    align-items: center;
    justify-content: center;
}
.new-tab {
    width: 12px;
    height: 12px;
    margin-left: 14px;
}
.win-ctrl {
    margin-left: auto;
    display: flex;
    gap: 21px;
    padding-right: 11px;
}
.win-ctrl svg {
    width: 11px;
    height: 11px;
}

/* barra de navegacion */
.toolbar {
    height: 38px;
    flex: none;
    background: #3a3a3f;
    border-radius: 6px 6px 0 0;
    display: flex;
    align-items: center;
    padding-left: 15px;
}
.nav-btns {
    display: flex;
    gap: 14px;
}
.nav-btns svg {
    width: 16px;
    height: 16px;
}
.bookmark-ic {
    width: 14px;
    height: 16px;
    margin-left: 246px;
}
.omnibox {
    width: 1080px;
    height: 32px;
    margin-left: 16px;
    background: #26262c;
    border-radius: 10px;
    display: flex;
    align-items: center;
    padding-left: 10px;
}
.info-ic {
    width: 14px;
    height: 14px;
}
.url {
    margin-left: 14px;
    font-size: 13.5px;
    color: #d6d6da;
    width: 978px;
    white-space: nowrap;
}
.share-ic {
    width: 16px;
    height: 16px;
    margin-left: -1px;
}
.omni-sep {
    width: 1px;
    height: 16px;
    background: #6a6a70;
    margin: 0 12px 0 7px;
}
.brave-ic {
    width: 16px;
    height: 20px;
}
.ext-icons {
    display: flex;
    align-items: center;
    gap: 12px;
    margin-left: 153px;
}
.ext-icons svg {
    width: 18px;
    height: 20px;
    display: block;
}
.ext-bw {
    position: relative;
}
.ext-badge {
    position: absolute;
    left: 8px;
    top: 10px;
    width: 13px;
    height: 13px;
    background: #1f4e5f;
    color: #fff;
    font: bold 10px/13px "Noto Sans", sans-serif;
    text-align: center;
    border-radius: 3px;
}
.ext-sep {
    width: 1px;
    height: 18px;
    margin-right: 5px;
    background: #5a5a60;
}

/* marcadores */
.bookmarks {
    height: 37px;
    flex: none;
    background: #3a3a3f;
    border-bottom: 1px solid #2c2c30;
    display: flex;
    align-items: center;
    padding-left: 12px;
    font-size: 12.5px;
    color: #e4e4e6;
}
.apps-ic {
    width: 16px;
    height: 16px;
    margin-right: 14px;
}
.bm-sep {
    width: 1px;
    height: 16px;
    background: #66666c;
}
.bm-list {
    display: flex;
    gap: 16.4px;
    margin-left: 15px;
}
.bm {
    display: flex;
    align-items: center;
    gap: 8px;
    white-space: nowrap;
}
.bm.long {
    width: 137.6px;
}
.bm svg {
    width: 16px;
    height: 16px;
    flex: none;
}
.bm-right {
    margin-left: auto;
    display: flex;
    align-items: center;
    padding-right: 12px;
}
.bm-more {
    width: 12px;
    height: 12px;
    margin-right: 12px;
}
.bm-right .bm-sep {
    margin-right: 14px;
}

/* odoo */
.odoo {
    position: relative;
    flex: 1;
    min-height: 0;
    display: flex;
    flex-direction: column;
    overflow: hidden;
    background: #fff;
    font-family: "Liberation Sans", Arial, sans-serif;
    font-size: 13px;
    color: #555;
}
.o-nav {
    height: 46px;
    flex: none;
    background: #73629f;
    border-bottom: 1px solid #5f5186;
    display: flex;
    align-items: center;
    padding-left: 16px;
    color: #fff;
}
.o-apps {
    width: 16px;
    height: 16px;
}
.o-brand {
    font-size: 20px;
    margin-left: 16px;
}
.o-menu {
    display: flex;
    gap: 32px;
    margin-left: 32px;
}
.o-systray {
    margin-left: auto;
    display: flex;
    align-items: center;
    padding-right: 15px;
}
.bug-ic {
    width: 12px;
    height: 15px;
}
.chat-ic {
    position: relative;
    margin-left: 18px;
    height: 15px;
}
.chat-ic svg {
    width: 17px;
    height: 15px;
    display: block;
}
.chat-badge {
    position: absolute;
    left: 10px;
    top: -8px;
    width: 15px;
    height: 15px;
    border-radius: 50%;
    background: #1d9a84;
    color: #fff;
    font-size: 11px;
    font-weight: normal;
    line-height: 15px;
    text-align: center;
}
.clock-ic {
    width: 15px;
    height: 15px;
    margin-left: 22px;
}
.avatar {
    width: 24px;
    height: 24px;
    border-radius: 50%;
    background: #b84a6a;
    margin-left: 32px;
    text-align: center;
    line-height: 24px;
    font-size: 14px;
}
.o-user {
    margin-left: 6px;
}

.cp {
    flex: none;
    background: #fff;
    border-bottom: 1px solid #d6d6d6;
}
.crumbs {
    height: 45px;
    padding-left: 16px;
    font-size: 18px;
    line-height: 46px;
    color: #666;
    white-space: nowrap;
}
.crumb-sep {
    margin: 0 4px;
}
.cp-row {
    height: 41px;
    display: flex;
    gap: 5px;
    padding-left: 16px;
}
.cp-status {
    height: 34px;
    gap: 3px;
    align-items: center;
    border-top: 1px solid #d6d6d6;
}
.btn {
    height: 30px;
    padding: 0 9px;
    background: #fff;
    border: 1px solid #dcdcdc;
    border-radius: 3px;
    color: #333;
    font-family: "Liberation Sans", Arial, sans-serif;
    font-size: 13px;
}
.cp-status .btn {
    height: 25px;
}
.btn.primary {
    background: #73619f;
    border-color: #73619f;
    color: #fff;
}
.btn.focus {
    box-shadow: 0 0 0 2px #b4aacb;
}
.pager {
    margin-left: auto;
    display: flex;
    align-items: center;
    height: 30px;
    color: #666;
    padding-right: 27px;
}
.pager span {
    margin-right: 26px;
}
.pager svg {
    width: 9px;
    height: 12px;
    margin-left: 18px;
}
.pager svg:first-of-type {
    margin-left: 0;
}
.statusbar {
    margin-left: auto;
    display: flex;
    align-self: stretch;
    padding-right: 31px;
    color: #666;
    font-size: 11.5px;
    line-height: 33px;
}
.st {
    padding: 0 0 0 11px;
}
.st-on {
    width: 79px;
    padding-left: 15px;
    background: #73619f;
    color: #fff;
    clip-path: polygon(0 0, 86% 0, 100% 50%, 86% 100%, 0 100%);
}

.content {
    flex: 1;
    min-height: 0;
    display: flex;
    justify-content: center;
    padding: 13px 12px 0 0;
    overflow: hidden;
    background: repeating-conic-gradient(#ededed 0 25%, #fbfbfb 0 50%) 0 0 / 4px 4px;
}
.sheet {
    width: 1140px;
    height: 900px;
    flex: none;
    background: #fff;
    border: 1px solid #dedede;
    padding: 24px 16px 0 15px;
}
.sheet-kind {
    font-weight: bold;
    color: #333;
    line-height: 18px;
}
.sheet-title {
    margin: 5px 0 0;
    font-size: 26px;
    line-height: 32px;
    color: #222;
}
.groups {
    display: flex;
    margin-top: 34px;
}
.fgroup {
    width: 554px;
    display: grid;
    grid-template-columns: 150px 1fr;
    align-content: start;
}
.fgroup.right {
    width: 554px;
    grid-template-columns: 149px 1fr;
}
.f-label {
    font-weight: bold;
    color: #111;
    line-height: 18px;
}
.first {
    height: 79px;
}
.first.h33 {
    height: 33px;
}
.first.tall {
    height: 39px;
    line-height: 19px;
    width: 120px;
}
.row33 {
    height: 33px;
    padding-top: 7px;
}
.row33.last {
    height: 39px;
}
.f-value {
    border-left: 1px solid #cfcfcf;
}
.f-value.plain {
    padding: 0 0 0 8px;
    line-height: 18px;
}
.f-value.plain .link {
    display: block;
    padding-top: 1px;
}
.addr {
    padding: 1px 0 0 8px;
    line-height: 20px;
}
.link {
    color: #7a69a6;
}
.nb-tabs {
    display: flex;
    height: 33px;
    margin: 21px -1px 0 0;
    border-bottom: 1px solid #d8d8d8;
}
.nb-tab {
    padding: 0 12px;
    line-height: 32px;
    color: #6e5f9a;
}
.nb-tab.on {
    background: #fff;
    border: 1px solid #d8d8d8;
    border-bottom-color: #fff;
    height: 33px;
    line-height: 31px;
    border-radius: 3px 3px 0 0;
    color: #555;
    margin-right: 2px;
}
.lines {
    width: 1106px;
    margin-top: 14px;
    table-layout: fixed;
    border-collapse: collapse;
}
.c-h { width: 34px; }
.c-p { width: 156px; }
.c-e { width: 222px; }
.c-n { width: 119px; }
.c-t { width: 290px; }
.c-s { width: 134px; }
.c-x { width: 32px; }
.lines th {
    height: 30px;
    padding: 0 3px;
    background: #ececec;
    border-left: 1px solid #e0e0e0;
    text-align: left;
    color: #333;
    font-size: 13px;
}
.lines th:first-child {
    border-left: none;
}
.lines td {
    height: 29.4px;
    padding: 0 3px 0 2px;
    border-bottom: 1px solid #dedede;
    white-space: nowrap;
    overflow: hidden;
}
.lines th.num {
    text-align: right;
    padding-right: 17px;
}
.lines td.num {
    text-align: right;
    padding-right: 4px;
}
.kebab svg {
    display: block;
    width: 4px;
    height: 12px;
    margin-left: 19px;
    fill: #333;
}
.del svg {
    display: block;
    width: 12px;
    height: 14px;
}
.tag {
    display: block;
    width: 214px;
    height: 19px;
    margin-left: 1px;
    border: 1px solid #555;
    border-radius: 9px;
    padding-left: 6px;
    font-size: 12.2px;
    font-weight: bold;
    line-height: 17px;
    color: #666;
}
.add-row {
    display: flex;
    gap: 16px;
    height: 28px;
    padding-left: 36px;
    line-height: 28px;
}
.lines-foot {
    width: 1106px;
    height: 8px;
    background: #ececec;
}
.totals {
    display: grid;
    grid-template-columns: auto 80px;
    column-gap: 30px;
    grid-auto-rows: 35px;
    justify-content: end;
    margin: 31px 48px 0 0;
}
.t-label {
    text-align: right;
    font-weight: bold;
    color: #222;
    line-height: 18px;
}
.t-val {
    text-align: right;
    white-space: nowrap;
    padding-top: 7px;
    line-height: 18px;
}
.t-val.strong {
    font-weight: bold;
}
.t-val.grand {
    font-size: 17px;
    font-weight: bold;
    height: 31px;
    margin-top: -4px;
    padding-top: 2px;
    line-height: 29px;
    border-top: 1px solid #999;
}

/* scrollbar de la pagina */
.scrollbar {
    position: absolute;
    right: 0;
    top: 132px;
    bottom: 0;
    width: 12px;
    display: flex;
    flex-direction: column;
    align-items: center;
}
.sb-up {
    width: 0;
    height: 0;
    margin-top: 7px;
    border: 5px solid transparent;
    border-top: none;
    border-bottom: 6px solid #333;
}
.sb-thumb {
    width: 9px;
    height: 543px;
    margin-top: 6px;
    border-radius: 5px;
    background: #999;
}
.sb-down {
    width: 0;
    height: 0;
    margin-top: auto;
    margin-bottom: 5px;
    border: 5px solid transparent;
    border-bottom: none;
    border-top: 6px solid #333;
}

.backdrop {
    position: absolute;
    inset: 0;
    background: rgba(0, 0, 0, .5);
}

/* dialogo */
.dialog {
    position: absolute;
    left: 471px;
    top: 22px;
    width: 978px;
    height: 175px;
    background: #fff;
    box-shadow: 0 1px 2px rgba(0, 0, 0, .4);
    color: #4c4c4c;
}
.dlg-head {
    height: 48px;
    display: flex;
    align-items: center;
    justify-content: space-between;
    padding: 0 13px 0 12px;
    border-bottom: 1px solid #e2e2e2;
}
.dlg-head h4 {
    margin: 0;
    font-size: 15px;
    color: #222;
}
.dlg-close {
    font-size: 18px;
    font-weight: bold;
    color: #666;
    margin-top: -5px;
}
.dlg-body {
    height: 65px;
    padding: 17px 16px 0;
    font-size: 13px;
    line-height: 18px;
    border-bottom: 1px solid #e2e2e2;
}
.dlg-foot {
    padding: 16px;
}
.dlg-foot .btn {
    display: block;
    width: 65px;
    height: 30px;
    padding: 0;
}

.click-mark {
    position: absolute;
    left: 37.5px;
    top: 114px;
    width: 60px;
    height: 60px;
}

/* grabador de pasos */
.recorder {
    position: absolute;
    left: 1719px;
    top: 543px;
    width: 187px;
    height: 234px;
    border: 1px solid #111;
    border-radius: 9px 9px 0 0;
    overflow: hidden;
    box-shadow: 0 4px 12px rgba(0, 0, 0, .3);
    font-family: "Noto Sans", sans-serif;
}
.rec-head {
    height: 33px;
    padding: 0 0 2px 15px;
    background: #2b2b2b;
    display: flex;
    align-items: center;
    color: #8e8e8e;
    font-size: 13px;
}
.rec-min {
    margin-left: 8px;
}
.rec-close {
    width: 18px;
    height: 18px;
    margin-left: auto;
    margin-right: 8px;
    border-radius: 50%;
    background: #5d5d5d;
    display: flex;
    align-items: center;
    justify-content: center;
}
.rec-body {
    height: 201px;
    background: #2c3e50;
    color: #ecf0f1;
    padding-top: 8px;
}
.rec-name {
    text-align: center;
    font-size: 13px;
    font-weight: bold;
    line-height: 18px;
}
.rec-state {
    display: flex;
    align-items: center;
    height: 20px;
    margin-top: 9px;
    padding-left: 46px;
}
.dot {
    width: 12px;
    height: 12px;
    border-radius: 50%;
}
.dot.green {
    background: #27ae60;
}
.dot.red {
    background: #f44336;
    margin-left: 9px;
}
.rec-label {
    margin-left: 3px;
    font-size: 10.5px;
    color: #f00;
}
.rec-stats {
    display: flex;
    justify-content: center;
    gap: 7px;
    margin-top: 7px;
    height: 18px;
    font-size: 10.5px;
    line-height: 18px;
    color: #7f8c8d;
    white-space: nowrap;
}
.rec-stats b {
    font-weight: normal;
    color: #3498db;
}
.rec-stats .s-num {
    margin-right: 6px;
}
.rec-main {
    display: flex;
    justify-content: center;
    gap: 2px;
    margin-top: 14px;
}
.r-btn {
    width: 31px;
    height: 25px;
    padding: 0;
    color: #fff;
    font-size: 12px;
    font-weight: bold;
    display: flex;
    align-items: center;
    justify-content: center;
}
.r-red { background: #e74c3c; }
.r-orange { background: #f39c12; }
.r-green { background: #27ae60; }
.rec-dot {
    width: 9px;
    height: 9px;
    border-radius: 50%;
    background: #999;
}
.rec-sq {
    width: 7px;
    height: 7px;
    background: #fff;
}
.rec-small {
    display: flex;
    gap: 2px;
    margin: 10px 0 0 9px;
    width: 167px;
}
.s-btn {
    width: 46px;
    height: 23px;
    padding: 0;
    background: #34495e;
    color: #ecf0f1;
    font-family: "Noto Sans", sans-serif;
    font-size: 11.5px;
    flex: none;
}
.s-btn.cut {
    width: 23px;
}
.s-btn.wide {
    display: block;
    width: 169px;
    margin: 6px 0 0 8px;
}

/* panel del escritorio */
.taskbar {
    height: 41px;
    flex: none;
    background: #181818;
    display: flex;
    align-items: center;
    color: #ddd;
}
.tb-start {
    width: 78px;
    height: 32px;
    padding-left: 6px;
    display: flex;
    align-items: center;
    gap: 6px;
    border-right: 1px solid #333;
    font-size: 13px;
    letter-spacing: .4px;
    color: #c8c8c8;
}
.tb-start svg {
    width: 32px;
    height: 32px;
    flex: none;
}
.launchers {
    display: flex;
    margin-left: 22px;
    align-self: stretch;
}
.app {
    position: relative;
    width: 44px;
    display: flex;
    align-items: center;
    justify-content: center;
    padding-bottom: 1px;
}
.app svg {
    width: 28px;
    height: 28px;
}
.app svg.ic-docker {
    width: 32px;
    height: 32px;
}
.app svg.ic-gear {
    width: 26px;
    height: 26px;
}
.app.cur {
    background: #3a3a3a;
}
.app.run::after {
    content: "";
    position: absolute;
    left: 3px;
    right: 3px;
    bottom: 0;
    height: 3px;
    background: #36a852;
}
.app-badge {
    position: absolute;
    left: 3px;
    top: 2px;
    width: 16px;
    height: 16px;
    border-radius: 50%;
    background: #36a852;
    color: #fff;
    font-size: 11px;
    font-weight: normal;
    line-height: 16px;
    text-align: center;
}
.tray {
    margin-left: auto;
    display: flex;
    align-items: center;
    gap: 11px;
    padding-right: 15px;
    align-self: stretch;
}
.tray svg {
    width: 18px;
    height: 18px;
}
.tray .t-dock {
    width: 24px;
    margin-right: -2px;
}
.tray .t-clip {
    margin-right: -4px;
}
.clock {
    font-size: 13px;
    margin-left: 1px;
    color: #ddd;
}
```
